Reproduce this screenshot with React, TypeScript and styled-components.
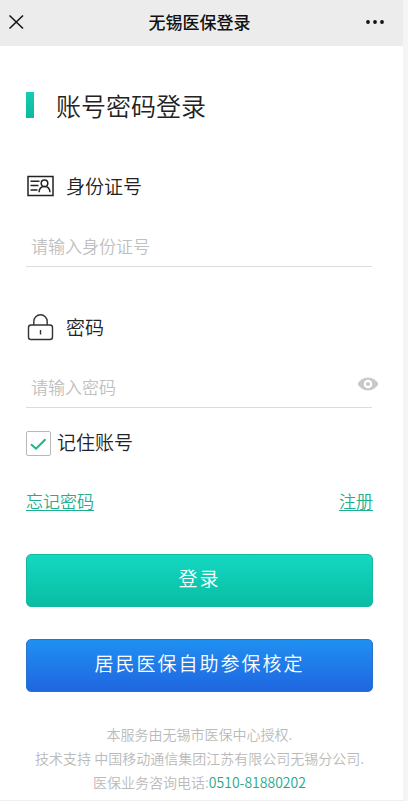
import React, { useState } from "react";
import styled, { createGlobalStyle } from "styled-components";

const GlobalStyle = createGlobalStyle`
  *, *::before, *::after { box-sizing: border-box; }
  body {
    margin: 0;
    background: #f5f5f5;
    color: #222;
    font-family: "Noto Sans CJK SC", sans-serif;
    font-weight: 350;
  }
  button, input { font: inherit; }
`;

const Screen = styled.div`
  display: flex;
  flex-direction: column;
  height: 100vh;
  margin-right: 5px;
  border-bottom: 1px solid #efefef;
  background: #fff;
`;

const TopBar = styled.header`
  display: grid;
  grid-template-columns: 40px 1fr 40px;
  align-items: center;
  flex: none;
  height: 46px;
  padding: 0 8px 2px;
  background: #ececec;
`;

const TopTitle = styled.h1`
  margin: 0;
  padding-right: 4px;
  text-align: center;
  font-size: 17px;
  line-height: 24px;
  font-weight: 500;
  color: #111;
`;

const IconButton = styled.button<{ $center?: boolean }>`
  display: flex;
  justify-content: ${(p) => (p.$center ? "center" : "flex-start")};
  padding: 0;
  border: 0;
  background: none;
  color: #111;
  cursor: pointer;
`;

const Content = styled.main`
  flex: 1;
  min-height: 0;
  overflow-y: auto;
  scrollbar-width: none;
  padding: 41px 30px 24px 26px;
`;

const Heading = styled.h2`
  display: flex;
  align-items: center;
  gap: 22px;
  margin: 0 0 49px;
  font-size: 25px;
  line-height: 36px;
  font-weight: 350;
  &::before {
    content: "";
    width: 8px;
    height: 26px;
    background: linear-gradient(#14cdb4, #0fb99e);
  }
`;

const Field = styled.div`
  margin-bottom: 46px;
  &:last-of-type { margin-bottom: 20px; }
`;

const FieldLabel = styled.label`
  display: flex;
  align-items: center;
  gap: 12px;
  font-size: 19px;
  line-height: 28px;
`;

const InputRow = styled.div`
  display: flex;
  align-items: center;
  height: 41px;
  margin: 26px 1px 0 0;
  padding-left: 5px;
  border-bottom: 1px solid #dcdcdc;
`;

const TextInput = styled.input`
  flex: 1;
  min-width: 0;
  height: 40px;
  padding: 0 0 2px;
  border: 0;
  outline: 0;
  background: none;
  font-size: 17px;
  &::placeholder { color: #c0c0c0; opacity: 1; }
`;

const EyeButton = styled(IconButton)`
  margin-right: -7px;
  padding-bottom: 6px;
  color: #c8c8c8;
`;

const Remember = styled.label`
  display: flex;
  align-items: center;
  gap: 6px;
  font-size: 19px;
  line-height: 28px;
  cursor: pointer;
`;

const CheckBox = styled.input`
  appearance: none;
  width: 25px;
  height: 25px;
  margin: 0;
  border: 1px solid #b8b8b8;
  border-radius: 2px;
  background: #fff;
`;

const BoxWrap = styled.span`
  display: grid;
  margin-top: 2px;
  > * { grid-area: 1 / 1; }
  > svg { pointer-events: none; visibility: hidden; }
  > input:checked + svg { visibility: visible; }
`;

const Links = styled.nav`
  display: flex;
  justify-content: space-between;
  margin: 32px 0 40px;
`;

const TextLink = styled.a`
  font-size: 17px;
  line-height: 26px;
  color: #1fae8e;
  text-underline-offset: 2px;
  text-decoration-thickness: 1px;
`;

const Actions = styled.div`
  display: grid;
  gap: 32px;
  margin-bottom: 30px;
`;

const Action = styled.button<{ $from: string; $to: string; $edge: string }>`
  height: 53px;
  padding: 0 0 5px;
  border: 1px solid ${(p) => p.$edge};
  border-radius: 5px;
  background: linear-gradient(${(p) => p.$from}, ${(p) => p.$to});
  color: #fff;
  font-size: 19px;
  line-height: 28px;
  letter-spacing: 2px;
  cursor: pointer;
`;

const Footer = styled.footer`
  text-align: center;
  font-size: 14px;
  line-height: 24px;
  color: #bababa;
  p { margin: 0; }
`;

const Phone = styled.a`
  color: #1fa98c;
  text-decoration: none;
`;

const CloseIcon = () => (
  <svg width="17" height="16" viewBox="0 0 17 16" fill="none" stroke="currentColor" strokeWidth="1.5" aria-hidden="true">
    <path d="M1.5 1.5 15 14.5M15 1.5 1.5 14.5" />
  </svg>
);

const MoreIcon = () => (
  <svg width="20" height="6" viewBox="0 0 20 6" fill="currentColor" aria-hidden="true">
    <circle cx="3" cy="3" r="1.9" />
    <circle cx="10" cy="3" r="1.9" />
    <circle cx="17" cy="3" r="1.9" />
  </svg>
);

const IdCardIcon = () => (
  <svg width="28" height="22" viewBox="0 0 28 22" fill="none" stroke="#222" strokeWidth="1.5" aria-hidden="true">
    <rect x="2" y="1.5" width="25" height="19" />
    <path d="M4.500 6.200H13.500M4.500 10.500H12.500M4.500 15H11.500" />
    <circle cx="18.500" cy="8.300" r="3.300" />
    <path d="M13 17.300c.3-3.700 2.400-5.700 5.500-5.700s5.200 2 5.500 5.700" />
  </svg>
);

const LockIcon = () => (
  <svg width="28" height="28" viewBox="0 0 28 28" fill="none" stroke="#333" strokeWidth="1.4" aria-hidden="true">
    <rect x="2.500" y="12" width="24" height="14.500" rx="2.500" />
    <path d="M7.800 12V8.500a6.700 6.700 0 0 1 13.400 0V12M14.500 17v4.500" />
  </svg>
);

const EyeIcon = () => (
  <svg width="22" height="14" viewBox="0 0 22 14" aria-hidden="true">
    <path fill="currentColor" d="M.5 7C3 2.700 6.600.5 11 .5S19 2.700 21.500 7C19 11.300 15.400 13.500 11 13.500S3 11.300.5 7Z" />
    <circle cx="11" cy="7" r="3.200" fill="none" stroke="#fff" strokeWidth="2.200" />
  </svg>
);

const TickIcon = () => (
  <svg width="25" height="25" viewBox="0 0 25 25" fill="none" stroke="#1fb488" strokeWidth="2" aria-hidden="true">
    <path d="M5 13.200 10 17.700 19.500 8.300" />
  </svg>
);

export default function App() {
  const [remember, setRemember] = useState(true);
  const [visible, setVisible] = useState(false);

  return (
    <>
      <GlobalStyle />
      <Screen>
        <TopBar>
          <IconButton type="button" aria-label="关闭"><CloseIcon /></IconButton>
          <TopTitle>无锡医保登录</TopTitle>
          <IconButton type="button" aria-label="更多" $center><MoreIcon /></IconButton>
        </TopBar>
        <Content>
          <Heading>账号密码登录</Heading>
          <form onSubmit={(e) => e.preventDefault()}>
            <section>
              <Field>
                <FieldLabel htmlFor="idno"><IdCardIcon />身份证号</FieldLabel>
                <InputRow>
                  <TextInput id="idno" placeholder="请输入身份证号" />
                </InputRow>
              </Field>
              <Field>
                <FieldLabel htmlFor="password"><LockIcon />密码</FieldLabel>
                <InputRow>
                  <TextInput id="password" type={visible ? "text" : "password"} placeholder="请输入密码" />
                  <EyeButton type="button" aria-label="显示密码" onClick={() => setVisible(!visible)}>
                    <EyeIcon />
                  </EyeButton>
                </InputRow>
              </Field>
            </section>
            <Remember>
              <BoxWrap>
                <CheckBox type="checkbox" checked={remember} onChange={(e) => setRemember(e.target.checked)} />
                <TickIcon />
              </BoxWrap>
              记住账号
            </Remember>
            <Links>
              <TextLink href="#forgot">忘记密码</TextLink>
              <TextLink href="#register">注册</TextLink>
            </Links>
            <Actions>
              <Action type="submit" $from="#14d8c2" $to="#08bda2" $edge="#16b7a0">登录</Action>
              <Action type="button" $from="#1f90f2" $to="#2066e0" $edge="#2a72cc">居民医保自助参保核定</Action>
            </Actions>
          </form>
          <Footer>
            <p>本服务由无锡市医保中心授权.</p>
            <p>技术支持 中国移动通信集团江苏有限公司无锡分公司.</p>
            <p>医保业务咨询电话:<Phone href="tel:0510-81880202">0510-81880202</Phone></p>
            <p>技术支持咨询电话:<Phone href="tel:0510-81880202">0510-81880202</Phone></p>
          </Footer>
        </Content>
      </Screen>
    </>
  );
}
